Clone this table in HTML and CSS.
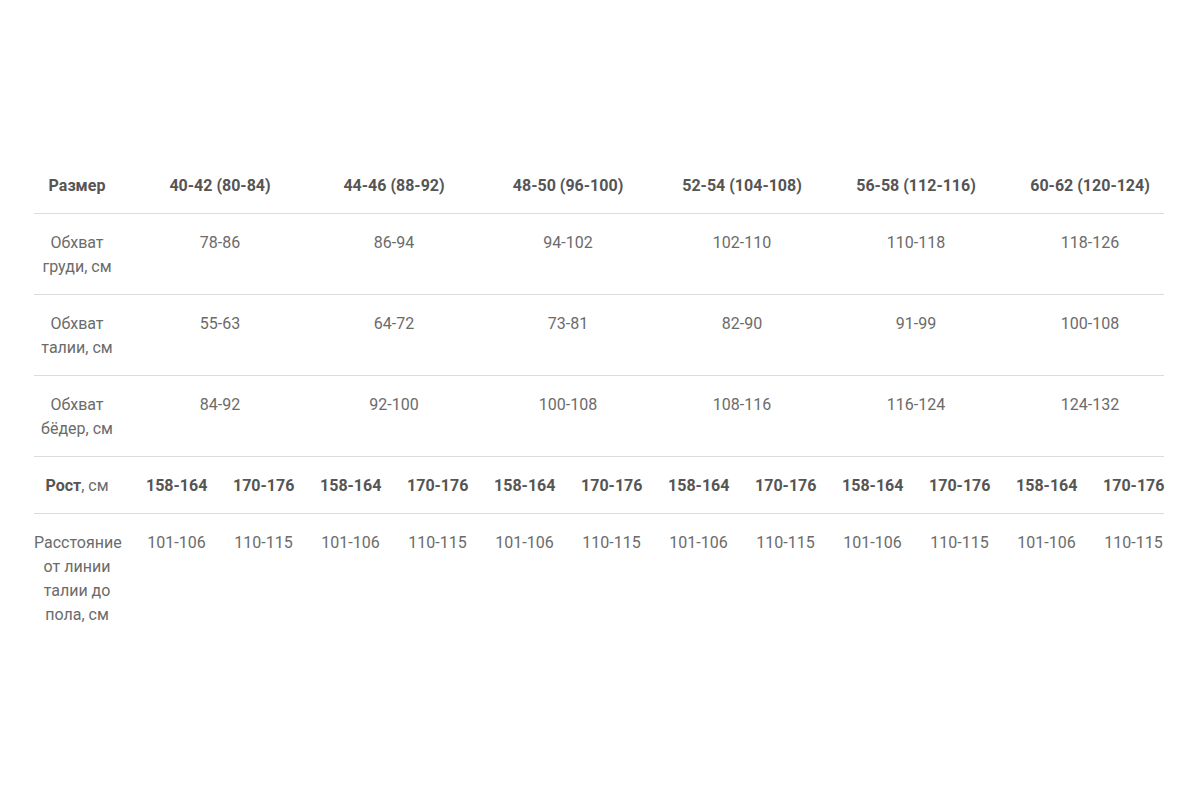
FILE: index.html
```html
<!DOCTYPE html>
<html lang="ru">
<head>
<meta charset="utf-8">
<title>Таблица размеров</title>
<link rel="stylesheet" href="styles.css">
</head>
<body>
<div class="page">
<table class="sizes">
  <colgroup>
    <col class="c-label">
    <col class="c-sub"><col class="c-sub"><col class="c-sub"><col class="c-sub">
    <col class="c-sub"><col class="c-sub"><col class="c-sub"><col class="c-sub">
    <col class="c-sub"><col class="c-sub"><col class="c-sub"><col class="c-sub">
  </colgroup>
  <tr class="head">
    <th>Размер</th>
    <th colspan="2">40-42 (80-84)</th>
    <th colspan="2">44-46 (88-92)</th>
    <th colspan="2">48-50 (96-100)</th>
    <th colspan="2">52-54 (104-108)</th>
    <th colspan="2">56-58 (112-116)</th>
    <th colspan="2">60-62 (120-124)</th>
  </tr>
  <tr>
    <td>Обхват груди, см</td>
    <td colspan="2">78-86</td>
    <td colspan="2">86-94</td>
    <td colspan="2">94-102</td>
    <td colspan="2">102-110</td>
    <td colspan="2">110-118</td>
    <td colspan="2">118-126</td>
  </tr>
  <tr>
    <td>Обхват талии, см</td>
    <td colspan="2">55-63</td>
    <td colspan="2">64-72</td>
    <td colspan="2">73-81</td>
    <td colspan="2">82-90</td>
    <td colspan="2">91-99</td>
    <td colspan="2">100-108</td>
  </tr>
  <tr>
    <td>Обхват бёдер, см</td>
    <td colspan="2">84-92</td>
    <td colspan="2">92-100</td>
    <td colspan="2">100-108</td>
    <td colspan="2">108-116</td>
    <td colspan="2">116-124</td>
    <td colspan="2">124-132</td>
  </tr>
  <tr class="height">
    <td><b>Рост</b>, см</td>
    <th>158-164</th><th>170-176</th>
    <th>158-164</th><th>170-176</th>
    <th>158-164</th><th>170-176</th>
    <th>158-164</th><th>170-176</th>
    <th>158-164</th><th>170-176</th>
    <th>158-164</th><th>170-176</th>
  </tr>
  <tr class="last">
    <td>Расстояние от линии талии до пола, см</td>
    <td>101-106</td><td>110-115</td>
    <td>101-106</td><td>110-115</td>
    <td>101-106</td><td>110-115</td>
    <td>101-106</td><td>110-115</td>
    <td>101-106</td><td>110-115</td>
    <td>101-106</td><td>110-115</td>
  </tr>
</table>
</div>
</body>
</html>
```

FILE: styles.css
```css
html, body {
  margin: 0;
  padding: 0;
  background: #fff;
}

.page {
  padding: 157px 0 0 34px;
  font-family: Roboto, "Noto Sans", "Liberation Sans", sans-serif;
  font-size: 16px;
  line-height: 24px;
  color: #6b6b6b;
}

.sizes {
  width: 1130px;
  table-layout: fixed;
  border-collapse: collapse;
  border-spacing: 0;
}

.c-label { width: 86px; }
.c-sub { width: 87px; }

.sizes th,
.sizes td {
  padding: 17px 0 15px 26px;
  text-align: center;
  vertical-align: top;
}

.sizes th:first-child,
.sizes td:first-child {
  padding-left: 0;
}

.sizes th {
  font-weight: 700;
  color: #555;
  white-space: nowrap;
}

.sizes b {
  font-weight: 700;
  color: #555;
}

.sizes tr {
  border-bottom: 1px solid #dcdcdc;
}

.sizes tr.last {
  border-bottom: none;
}
```
